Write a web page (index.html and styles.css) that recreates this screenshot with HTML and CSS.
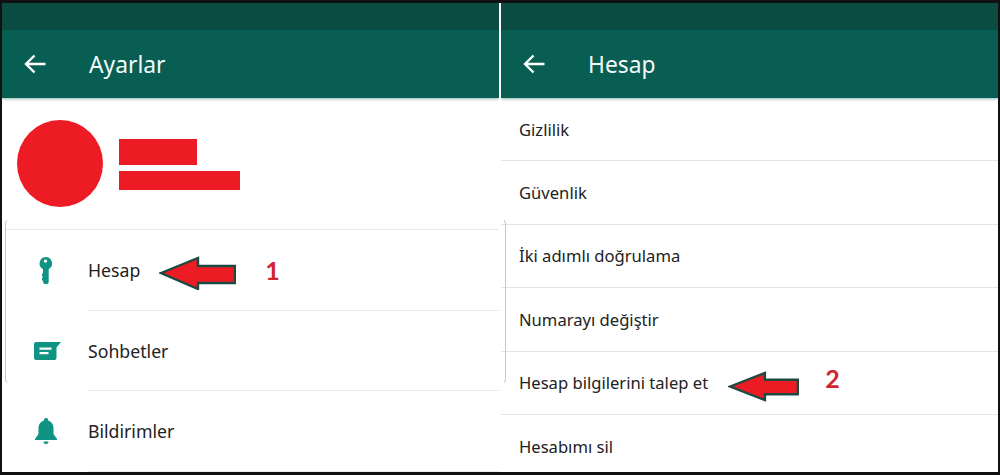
FILE: index.html
```html
<!DOCTYPE html>
<html lang="en">
<head>
    <meta charset="UTF-8">
    <title>Ayarlar - Hesap</title>
    <link rel="stylesheet" href="styles.css">
</head>
<body>
    <div class="frame">
        <!-- left phone screen -->
        <section class="screen">
            <div class="status-bar"></div>
            <header class="toolbar">
                <svg class="back" viewBox="0 0 22 20"><path d="M10.5 1.5 2 10l8.500 8.500M2 10h19.500"/></svg>
                <h1>Ayarlar</h1>
            </header>
            <div class="profile">
                <div class="avatar"></div>
                <div class="name-bars">
                    <div class="bar-short"></div>
                    <div class="bar-long"></div>
                </div>
            </div>
            <ul class="settings">
                <li class="setting">
                    <span class="icon-cell">
                        <svg class="icon-key" viewBox="0 0 13 27"><path fill-rule="evenodd" d="M6.500 0a6.500 6.500 0 0 1 3.200 12.200V25a2 2 0 0 1-2 2H6a2 2 0 0 1-2-2v-1l-1-1v-2l1-1-1-1v-2l1-1v-3.800A6.500 6.500 0 0 1 6.500 0Zm0 2.400a1.700 1.700 0 1 0 0 3.400 1.700 1.700 0 0 0 0-3.400Z"/></svg>
                    </span>
                    <span>Hesap</span>
                    <svg class="arrow arrow-one" viewBox="0 0 77 34"><path d="M2 17 39 2v8h37v17H39v6Z"/></svg>
                    <span class="step step-one">1</span>
                </li>
                <li class="setting">
                    <span class="icon-cell">
                        <svg class="icon-chat" viewBox="0 0 27 18"><path fill-rule="evenodd" d="M2 0h25l-4.500 5.500V16a2 2 0 0 1-2 2H2a2 2 0 0 1-2-2V2a2 2 0 0 1 2-2Zm3.500 5.500v2.200h12V5.500Zm0 4.500v2.200h9V10Z"/></svg>
                    </span>
                    <span>Sohbetler</span>
                </li>
                <li class="setting">
                    <span class="icon-cell">
                        <svg class="icon-bell" viewBox="0 0 22 26"><path d="M11 0a2 2 0 0 1 2 2.400c3.700 1 5.500 4.200 5.500 8V16l3.500 5v1H0v-1l3.500-5v-5.600c0-3.800 1.800-7 5.500-8A2 2 0 0 1 11 0ZM8.500 23.500h5a2.500 2.500 0 0 1-5 0Z"/></svg>
                    </span>
                    <span>Bildirimler</span>
                </li>
            </ul>
        </section>

        <!-- right phone screen -->
        <section class="screen screen-right">
            <div class="status-bar"></div>
            <header class="toolbar">
                <svg class="back" viewBox="0 0 22 20"><path d="M10.500 1.500 2 10l8.500 8.500M2 10h19.500"/></svg>
                <h1>Hesap</h1>
            </header>
            <ul class="account">
                <li class="account-row">Gizlilik</li>
                <li class="account-row">Güvenlik</li>
                <li class="account-row">İki adımlı doğrulama</li>
                <li class="account-row">Numarayı değiştir</li>
                <li class="account-row">
                    <span>Hesap bilgilerini talep et</span>
                    <svg class="arrow arrow-two" viewBox="0 0 73 32"><path d="M2 16 38 2v7h34v15H38v6Z"/></svg>
                    <span class="step step-two">2</span>
                </li>
                <li class="account-row">Hesabımı sil</li>
            </ul>
        </section>

        <!-- thin bracket left over from the cropped screenshots -->
        <div class="bracket"></div>
    </div>
</body>
</html>
```

FILE: styles.css
```css
* {
    box-sizing: border-box;
}
body {
    margin: 0;
    font-family: "Noto Sans", sans-serif;
    background: #fff;
}
.frame {
    position: relative;
    display: flex;
    width: 1000px;
    height: 475px;
    border: solid #111;
    border-width: 3px 2px;
    overflow: hidden;
}
.screen {
    flex: 0 0 497px;
    height: 100%;
    overflow: hidden;
}
.screen-right {
    flex: 1;
    border-left: 2px solid #fff;
}
.status-bar {
    height: 27px;
    background: #0a4c42;
}
.toolbar {
    display: flex;
    align-items: center;
    height: 68px;
    padding-left: 22px;
    background: #095e53;
    box-shadow: 0 1px 3px rgba(9, 94, 83, 0.45);
}
.toolbar h1 {
    margin: 0 0 0 43px;
    font-size: 22.8px;
    font-weight: 400;
    color: #f3fbf9;
}
.back {
    width: 22px;
    height: 20px;
    fill: none;
    stroke: #fff;
    stroke-width: 2.4;
}
.profile {
    display: flex;
    align-items: center;
    gap: 16px;
    height: 131px;
    padding-left: 15px;
}
.avatar {
    width: 86px;
    height: 87px;
    border-radius: 50%;
    background: #ed1c24;
}
.name-bars {
    display: flex;
    flex-direction: column;
    gap: 6px;
    margin-top: 2px;
}
.bar-short {
    width: 78px;
    height: 26px;
    background: #ed1c24;
}
.bar-long {
    width: 121px;
    height: 19px;
    background: #ed1c24;
}
.settings,
.account {
    margin: 0;
    padding: 0;
    list-style: none;
}
.settings {
    border-top: 1px solid #e9e9e9;
    margin-left: 4px;
}
.setting {
    position: relative;
    display: flex;
    align-items: center;
    height: 80.5px;
    font-size: 17.7px;
    color: #222;
}
.setting::after {
    content: "";
    position: absolute;
    left: 82px;
    right: 0;
    bottom: 0;
    border-bottom: 1px solid #e9e9e9;
}
.icon-cell {
    display: flex;
    flex: none;
    justify-content: center;
    width: 82px;
}
.icon-key {
    width: 13px;
    height: 27px;
    margin-right: 4px;
    fill: #0f9484;
}
.icon-chat {
    width: 27px;
    height: 18px;
    fill: #0f9484;
}
.icon-bell {
    width: 22px;
    height: 26px;
    margin-right: 2px;
    fill: #0f9484;
}
.arrow {
    flex: none;
    fill: #ed1c24;
    stroke: #1c4a40;
    stroke-width: 2.4;
}
.arrow-one {
    width: 77px;
    height: 34px;
    margin: 5px 0 0 19px;
}
.arrow-two {
    width: 71px;
    height: 31px;
    margin: 8px 0 0 20px;
}
.step {
    flex: none;
    font-family: "Lato", sans-serif;
    font-size: 25px;
    font-weight: 700;
    color: #cf2530;
}
.step-one {
    margin-left: 29px;
}
.step-two {
    margin: 0 0 10px 26px;
}
.account-row {
    display: flex;
    align-items: center;
    height: 63.4px;
    padding-left: 18px;
    font-size: 16.6px;
    color: #222;
    border-bottom: 1px solid #e4e4e4;
}
.account-row:last-child {
    border-bottom: none;
}
.bracket {
    position: absolute;
    left: 3px;
    top: 215px;
    width: 501px;
    height: 167px;
    border: 1px solid #c8c8c8;
    border-top-color: transparent;
    border-bottom-color: transparent;
    border-radius: 6px;
    pointer-events: none;
}
```
